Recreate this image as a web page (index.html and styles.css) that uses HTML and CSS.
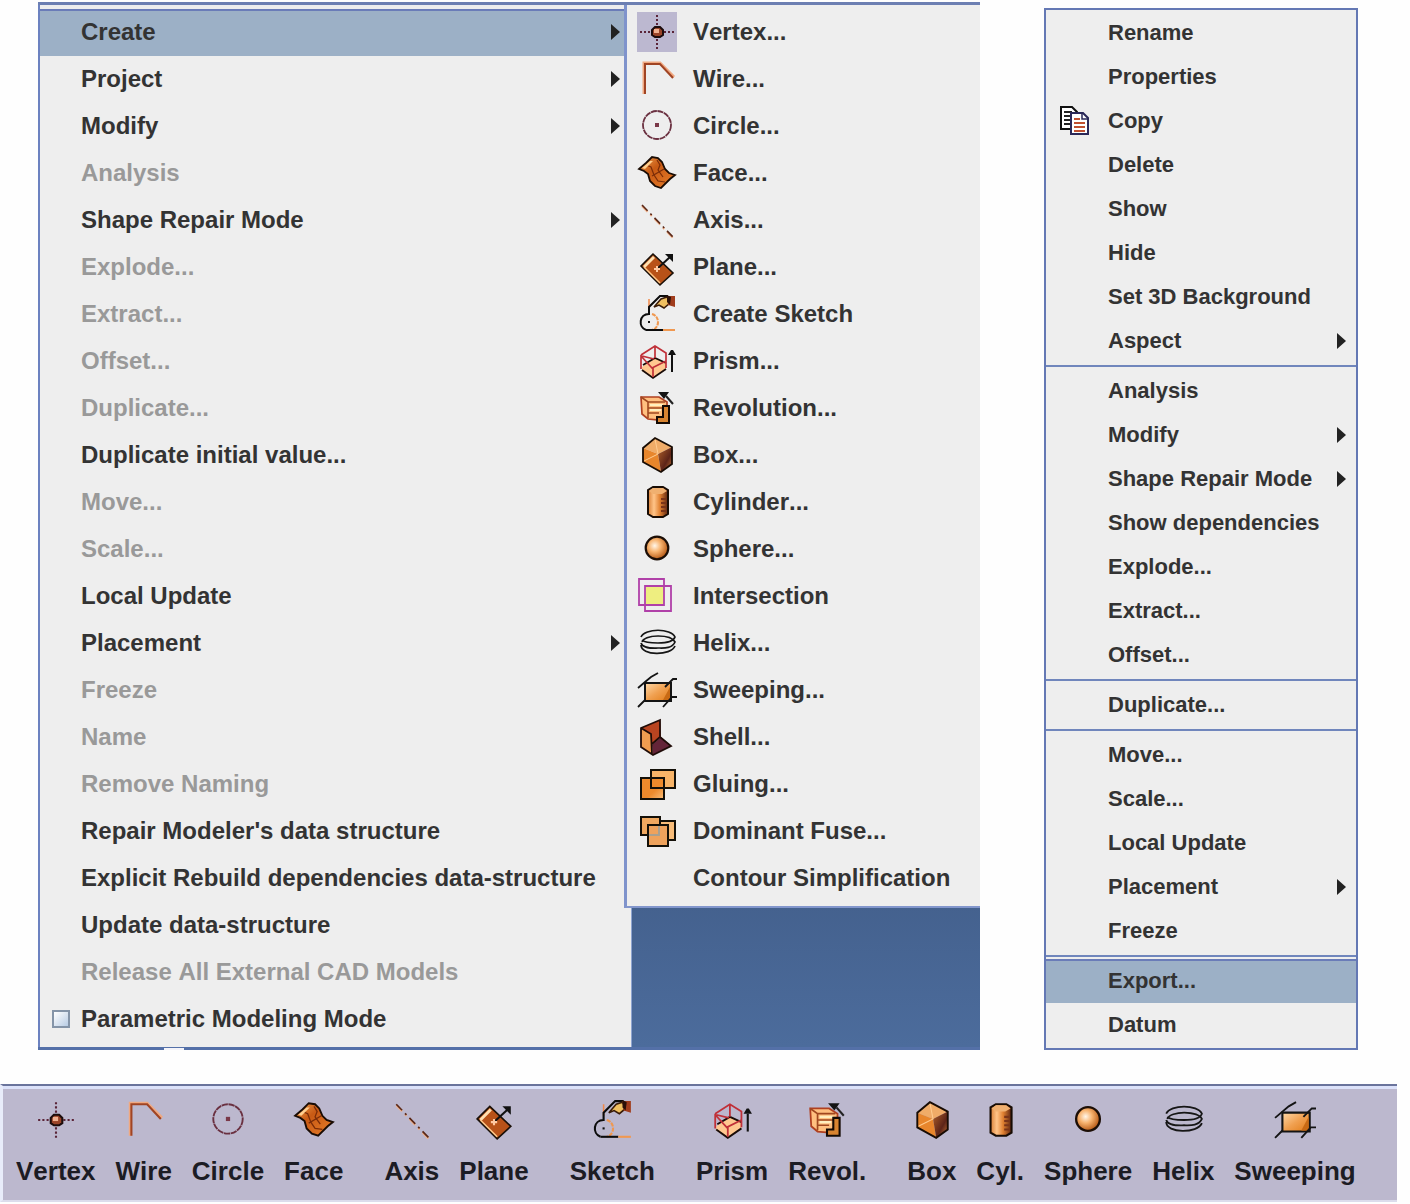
FILE: index.html
```html
<!DOCTYPE html>
<html lang="en">
<head>
<meta charset="utf-8">
<title>Geometry menus</title>
<link rel="stylesheet" href="styles.css">
</head>
<body>
<svg class="defs" aria-hidden="true">
  <defs>
    <linearGradient id="g-orange" x1="0" y1="0" x2="1" y2="1"><stop offset="0" stop-color="#ffd9a8"/><stop offset=".5" stop-color="#f0a050"/><stop offset="1" stop-color="#e07a14"/></linearGradient>
    <linearGradient id="g-deep" x1="0" y1="0" x2="1" y2="1"><stop offset="0" stop-color="#ee8a2c"/><stop offset=".6" stop-color="#ee8a2c"/><stop offset="1" stop-color="#fbc07c"/></linearGradient>
    <linearGradient id="g-face" x1="0" y1="0" x2="1" y2="1"><stop offset="0" stop-color="#f0a050"/><stop offset=".4" stop-color="#c85a14"/><stop offset="1" stop-color="#e8802c"/></linearGradient>
    <linearGradient id="g-dark" x1="0" y1="0" x2="1" y2="1"><stop offset="0" stop-color="#b06028"/><stop offset=".6" stop-color="#5c2418"/><stop offset="1" stop-color="#c87838"/></linearGradient>
    <linearGradient id="g-cyl"><stop offset="0" stop-color="#d88038"/><stop offset=".3" stop-color="#ffc488"/><stop offset=".6" stop-color="#e08030"/><stop offset="1" stop-color="#5c2410"/></linearGradient>
    <radialGradient id="g-ball" cx=".4" cy=".4" r=".6"><stop offset="0" stop-color="#fff6ea"/><stop offset=".45" stop-color="#f8b470"/><stop offset="1" stop-color="#b85c18"/></radialGradient>
  </defs>
  <symbol id="arrow" viewBox="0 0 10 16"><path d="M1 0L10 8L1 16Z" fill="#222"/></symbol>
  <symbol id="vertex" viewBox="0 0 40 40">
    <path d="M20 3V38M3 20H39" stroke="#5a2438" stroke-width="2" stroke-dasharray="2 2" fill="none"/>
    <path d="M18 15H23L26 18V23L23 25H18L15 23V18Z" fill="#9a4428" stroke="#1c0c0c" stroke-width="2"/><rect x="17" y="17" width="5" height="4" fill="#f0b090"/>
  </symbol>
  <symbol id="wire" viewBox="0 0 40 40" fill="none">
    <path d="M7 35V4H23L37 18" stroke="#f0a880" stroke-width="3"/><path d="M8 35V5H23L36 19" stroke="#a04424" stroke-width="2"/>
  </symbol>
  <symbol id="circle" viewBox="0 0 40 40"><circle cx="20" cy="19" r="14" fill="none" stroke="#6a3040" stroke-width="1.8" stroke-dasharray="6 .6"/><rect x="18" y="17" width="4" height="4" fill="#7a3848"/></symbol>
  <symbol id="face" viewBox="0 0 40 40">
    <path d="M2 16L9 10L15 4L21 5L25 9L28 16L32 20L38 22L33 26L24 35L18 33L13 28L11 21L7 18Z" fill="url(#g-face)" stroke="#1a0c04" stroke-width="1.8"/>
    <path d="M9 12L14 14L17 22L21 28L28 29M15 23L27 16M20 7L23 12L21 17L26 24" fill="none" stroke="#7a2c08" stroke-width="1.2"/><path d="M5 15L13 8L16 8L8 16Z" fill="#ffd090"/>
  </symbol>
  <symbol id="axis" viewBox="0 0 40 40" fill="none"><path d="M5 6L36 38" stroke="#f0b088" stroke-width="2" stroke-dasharray="8 4 2 4"/><path d="M5 5L36 37" stroke="#5a2818" stroke-width="1.6" stroke-dasharray="8 4 2 4"/></symbol>
  <symbol id="plane" viewBox="0 0 40 40">
    <path d="M4 19L16 7L36 26L23 38Z" fill="#b85218" stroke="#1a1008" stroke-width="1.6"/>
    <path d="M6 19L16 9L18 11L8 21Z" fill="#ffe0b0"/><path d="M7 20L23 36" stroke="#ffc888" stroke-width="1.5"/>
    <path d="M20 22L33 10" stroke="#111" stroke-width="2"/><path d="M28 7H36V15Z" fill="#111"/><path d="M17 22H23M20 19V25" stroke="#ffc8a0" stroke-width="2"/>
  </symbol>
  <symbol id="sketch" viewBox="0 0 40 40" fill="none">
    <path d="M12 5V16" stroke="#f08848" stroke-width="1.5"/><path d="M15 20C23 22 23 34 15 36" stroke="#f09850" stroke-width="2" stroke-dasharray="4 1"/>
    <path d="M12 20C2 20 1 33 9 36M12 21V13L23 2H31" stroke="#0c0c0c" stroke-width="2"/><path d="M9 36H26" stroke="#0c0c0c" stroke-width="2"/><path d="M26 36H38" stroke="#f09850" stroke-width="2"/>
    <path d="M17 13L24 5L30 3L33 9L27 14L22 11Z" fill="#f0c060" stroke="#3a1c08" stroke-width="1.5"/><path d="M30 2H38V13L31 11Z" fill="#a03c1c"/><path d="M30 1L34 3L33 11L30 8Z" fill="#2a1008"/><path d="M11 28H13" stroke="#111" stroke-width="2"/>
  </symbol>
  <symbol id="prism" viewBox="0 0 40 40" fill="none">
    <path d="M5 26L18 17L29 22V28L16 37L5 30Z" fill="#ffc890"/><path d="M5 29L16 37L29 28M6 24L18 17L29 22" stroke="#1a0c08" stroke-width="1.8"/>
    <path d="M4 14L18 5L29 12V27M4 14V28M18 5V17M4 15L15 27L29 20M16 27V36M5 15L17 18" stroke="#c03038" stroke-width="1.7"/><path d="M35 14V31" stroke="#111" stroke-width="2"/><path d="M31 14L34 9H36L39 14Z" fill="#111"/>
  </symbol>
  <symbol id="revol" viewBox="0 0 40 40">
    <path d="M4 9H22L30 14V24L22 32L11 31L5 26Z" fill="#ffc080" stroke="#b04020" stroke-width="1.7"/><path d="M4 9L11 14H28M11 14V30M11 20H26M11 25H22" stroke="#a04820" stroke-width="1.6" fill="none"/><path d="M13 17H26M13 22H24" stroke="#fff0c0" stroke-width="2"/>
    <path d="M26 18H32V35H20V29H26Z" fill="#d88430" stroke="#140a04" stroke-width="2"/><path d="M21 4H32L27 11Z" fill="#141414"/><path d="M29 8L36 16" stroke="#222" stroke-width="2"/>
  </symbol>
  <symbol id="box" viewBox="0 0 40 40">
    <path d="M18 3L35 12L21 19L6 13Z" fill="#f0ac68"/><path d="M6 13L21 19L24 37L6 27Z" fill="#e8862c"/><path d="M35 12V29L24 37L21 19Z" fill="url(#g-dark)"/>
    <path d="M18 4L21 19L7 26" stroke="#ffcc90" stroke-width="1" fill="none"/><path d="M18 3L35 12V29L24 37L6 27V13Z" fill="none" stroke="#180c04" stroke-width="1.8"/>
  </symbol>
  <symbol id="cyl" viewBox="0 0 40 40"><path d="M11 8L16 5H26L31 8V32L26 35H16L11 32Z" fill="url(#g-cyl)" stroke="#180c04" stroke-width="2"/><path d="M12 9L16 6H26L30 9L25 12H16Z" fill="#f0b070"/><path d="M24 17H29M24 21H29M24 25H29M24 29H29" stroke="#7a3418" stroke-width="2"/></symbol>
  <symbol id="sphere" viewBox="0 0 40 40"><circle cx="20" cy="19" r="11.3" fill="url(#g-ball)" stroke="#1c0e06" stroke-width="2.2"/></symbol>
  <symbol id="inter" viewBox="0 0 40 40"><rect x="9" y="10" width="18" height="18" fill="#eeee80"/><path d="M2 3H27V29H2ZM8 10H34V35H8Z" fill="none" stroke="#b040a8" stroke-width="1.8"/></symbol>
  <symbol id="helix" viewBox="0 0 40 40" fill="none" stroke="#161616" stroke-width="1.7"><path d="M4 14C8 5 34 5 38 14C36 20 26 20 21 20S8 20 5 17M5 19C8 11 34 11 38 19C35 26 26 25 21 25S6 26 4 20M4 22C4 33 34 33 38 23"/></symbol>
  <symbol id="sweep" viewBox="0 0 40 40"><path d="M8 13H34V31H8Z" fill="url(#g-orange)" stroke="#141414" stroke-width="2"/><path d="M33 17V30H26Z" fill="#c86a14"/><path d="M1 18L8 12L14 7L21 3M28 17L36 9H40M1 37L8 30M26 37L35 27H40" stroke="#141414" stroke-width="1.8" fill="none"/></symbol>
  <symbol id="shell" viewBox="0 0 40 40"><path d="M4 11L23 3L24 20L15 27Z" fill="#b84420"/><path d="M4 11L14 17L16 38L4 30Z" fill="#f09c50"/><path d="M15 28L24 20L34 29L16 38Z" fill="#642438"/><path d="M4 11L23 3V20L34 29L16 38L4 30ZM4 11L14 17L15 37M15 27L23 20" fill="none" stroke="#200c08" stroke-width="1.8"/></symbol>
  <symbol id="glue" viewBox="0 0 40 40" stroke="#141008" stroke-width="2"><rect x="14" y="6" width="24" height="18" fill="#f8b468"/><rect x="4" y="14" width="23" height="21" fill="url(#g-deep)"/><path d="M14 14V24H27" fill="none"/></symbol>
  <symbol id="fuse" viewBox="0 0 40 40" stroke="#141008" stroke-width="2"><rect x="22" y="10" width="16" height="19" fill="#f8bc78"/><rect x="4" y="6" width="19" height="18" fill="#f0a860"/><rect x="11" y="14" width="20" height="21" fill="#eea25c"/><path d="M12 24H22V15" fill="none" stroke="#a8a090"/></symbol>
  <symbol id="copy" viewBox="0 0 30 30"><path d="M1 1H12L17 6V23H1Z" fill="#fff" stroke="#111" stroke-width="2"/><path d="M4 6H12M4 10H10M4 14H10M4 18H10" stroke="#222" stroke-width="2"/><path d="M11 7H23L28 12V28H11Z" fill="#fff" stroke="#2a2858" stroke-width="2"/><path d="M22 7V13H28" stroke="#2a2858" stroke-width="1.5" fill="none"/><path d="M14 13H20M14 17H25M14 21H25M14 25H25" stroke="#c05030" stroke-width="2"/></symbol>
</svg>

<main class="stage">
  <section class="window" aria-label="Modeler menu">
    <ul class="menu menu-main">
      <li><button class="item selected"><span>Create</span><svg class="arrow"><use href="#arrow"/></svg></button></li>
      <li><button class="item"><span>Project</span><svg class="arrow"><use href="#arrow"/></svg></button></li>
      <li><button class="item"><span>Modify</span><svg class="arrow"><use href="#arrow"/></svg></button></li>
      <li><button class="item" disabled><span>Analysis</span></button></li>
      <li><button class="item"><span>Shape Repair Mode</span><svg class="arrow"><use href="#arrow"/></svg></button></li>
      <li><button class="item" disabled><span>Explode...</span></button></li>
      <li><button class="item" disabled><span>Extract...</span></button></li>
      <li><button class="item" disabled><span>Offset...</span></button></li>
      <li><button class="item" disabled><span>Duplicate...</span></button></li>
      <li><button class="item"><span>Duplicate initial value...</span></button></li>
      <li><button class="item" disabled><span>Move...</span></button></li>
      <li><button class="item" disabled><span>Scale...</span></button></li>
      <li><button class="item"><span>Local Update</span></button></li>
      <li><button class="item"><span>Placement</span><svg class="arrow"><use href="#arrow"/></svg></button></li>
      <li><button class="item" disabled><span>Freeze</span></button></li>
      <li><button class="item" disabled><span>Name</span></button></li>
      <li><button class="item" disabled><span>Remove Naming</span></button></li>
      <li><button class="item"><span>Repair Modeler's data structure</span></button></li>
      <li><button class="item"><span>Explicit Rebuild dependencies data-structure</span></button></li>
      <li><button class="item"><span>Update data-structure</span></button></li>
      <li><button class="item" disabled><span>Release All External CAD Models</span></button></li>
      <li><label class="item" for="parametric"><input type="checkbox" id="parametric" class="check"><span>Parametric Modeling Mode</span></label></li>
    </ul>
    <ul class="menu menu-sub">
      <li><button class="item"><svg class="icon tile"><use href="#vertex"/></svg><span>Vertex...</span></button></li>
      <li><button class="item"><svg class="icon"><use href="#wire"/></svg><span>Wire...</span></button></li>
      <li><button class="item"><svg class="icon"><use href="#circle"/></svg><span>Circle...</span></button></li>
      <li><button class="item"><svg class="icon"><use href="#face"/></svg><span>Face...</span></button></li>
      <li><button class="item"><svg class="icon"><use href="#axis"/></svg><span>Axis...</span></button></li>
      <li><button class="item"><svg class="icon"><use href="#plane"/></svg><span>Plane...</span></button></li>
      <li><button class="item"><svg class="icon"><use href="#sketch"/></svg><span>Create Sketch</span></button></li>
      <li><button class="item"><svg class="icon"><use href="#prism"/></svg><span>Prism...</span></button></li>
      <li><button class="item"><svg class="icon"><use href="#revol"/></svg><span>Revolution...</span></button></li>
      <li><button class="item"><svg class="icon"><use href="#box"/></svg><span>Box...</span></button></li>
      <li><button class="item"><svg class="icon"><use href="#cyl"/></svg><span>Cylinder...</span></button></li>
      <li><button class="item"><svg class="icon"><use href="#sphere"/></svg><span>Sphere...</span></button></li>
      <li><button class="item"><svg class="icon"><use href="#inter"/></svg><span>Intersection</span></button></li>
      <li><button class="item"><svg class="icon"><use href="#helix"/></svg><span>Helix...</span></button></li>
      <li><button class="item"><svg class="icon"><use href="#sweep"/></svg><span>Sweeping...</span></button></li>
      <li><button class="item"><svg class="icon"><use href="#shell"/></svg><span>Shell...</span></button></li>
      <li><button class="item"><svg class="icon"><use href="#glue"/></svg><span>Gluing...</span></button></li>
      <li><button class="item"><svg class="icon"><use href="#fuse"/></svg><span>Dominant Fuse...</span></button></li>
      <li><button class="item"><span>Contour Simplification</span></button></li>
    </ul>
  </section>

  <ul class="menu menu-context">
    <li><button class="item"><span>Rename</span></button></li>
    <li><button class="item"><span>Properties</span></button></li>
    <li><button class="item"><svg class="copy"><use href="#copy"/></svg><span>Copy</span></button></li>
    <li><button class="item"><span>Delete</span></button></li>
    <li><button class="item"><span>Show</span></button></li>
    <li><button class="item"><span>Hide</span></button></li>
    <li><button class="item"><span>Set 3D Background</span></button></li>
    <li><button class="item"><span>Aspect</span><svg class="arrow"><use href="#arrow"/></svg></button></li>
    <li class="rule" role="separator"></li>
    <li><button class="item"><span>Analysis</span></button></li>
    <li><button class="item"><span>Modify</span><svg class="arrow"><use href="#arrow"/></svg></button></li>
    <li><button class="item"><span>Shape Repair Mode</span><svg class="arrow"><use href="#arrow"/></svg></button></li>
    <li><button class="item"><span>Show dependencies</span></button></li>
    <li><button class="item"><span>Explode...</span></button></li>
    <li><button class="item"><span>Extract...</span></button></li>
    <li><button class="item"><span>Offset...</span></button></li>
    <li class="rule" role="separator"></li>
    <li><button class="item"><span>Duplicate...</span></button></li>
    <li class="rule" role="separator"></li>
    <li><button class="item"><span>Move...</span></button></li>
    <li><button class="item"><span>Scale...</span></button></li>
    <li><button class="item"><span>Local Update</span></button></li>
    <li><button class="item"><span>Placement</span><svg class="arrow"><use href="#arrow"/></svg></button></li>
    <li><button class="item"><span>Freeze</span></button></li>
    <li class="rule" role="separator"></li>
    <li><button class="item selected"><span>Export...</span></button></li>
    <li><button class="item"><span>Datum</span></button></li>
  </ul>
</main>

<nav class="toolbar" aria-label="Shapes">
  <div class="group">
    <button class="tool"><svg><use href="#vertex"/></svg>Vertex</button>
    <button class="tool"><svg><use href="#wire"/></svg>Wire</button>
    <button class="tool"><svg><use href="#circle"/></svg>Circle</button>
    <button class="tool"><svg><use href="#face"/></svg>Face</button>
  </div>
  <div class="group">
    <button class="tool"><svg><use href="#axis"/></svg>Axis</button>
    <button class="tool"><svg><use href="#plane"/></svg>Plane</button>
  </div>
  <div class="group">
    <button class="tool"><svg><use href="#sketch"/></svg>Sketch</button>
  </div>
  <div class="group">
    <button class="tool"><svg><use href="#prism"/></svg>Prism</button>
    <button class="tool"><svg><use href="#revol"/></svg>Revol.</button>
  </div>
  <div class="group">
    <button class="tool"><svg><use href="#box"/></svg>Box</button>
    <button class="tool"><svg><use href="#cyl"/></svg>Cyl.</button>
    <button class="tool"><svg><use href="#sphere"/></svg>Sphere</button>
    <button class="tool"><svg><use href="#helix"/></svg>Helix</button>
    <button class="tool"><svg><use href="#sweep"/></svg>Sweeping</button>
  </div>
</nav>
</body>
</html>
```
FILE: styles.css
```css
* { box-sizing: border-box; }
body { margin: 0; background: #fefefe; font-family: "Liberation Sans", Arial, sans-serif; font-weight: bold; font-kerning: none; color: #333; }
button { font: inherit; font-kerning: inherit; color: inherit; background: none; border: 0; margin: 0; text-align: left; }
.defs { position: absolute; width: 0; height: 0; }

.stage { display: grid; grid-template-columns: 3fr 1fr; gap: 64px; padding: 2px 52px 0 38px; }

.window {
  position: relative;
  display: grid;
  grid-template-columns: 586fr 356fr;
  border-top: 3px solid #6c7fb2;
  border-bottom: 3px solid #5470a8;
  background: linear-gradient(#44618e 86%, #4c6c9c);
}
.window::after { content: ""; position: absolute; left: 126px; bottom: -3px; width: 20px; height: 2px; background: #f4f4fa; }

.menu { list-style: none; margin: 0; padding: 3px 0 5px; background: #eee; font-size: 24px; }
.item { display: flex; align-items: center; width: 100%; height: 47px; padding: 0 12px 2px 41px; white-space: nowrap; }
.item:disabled { color: #999; }
.selected { background: #9cb0c6; box-shadow: inset 0 2px #6a7cb8; }
.arrow { width: 10px; height: 16px; margin-left: auto; flex: none; }
.icon { width: 40px; height: 40px; margin-right: 16px; flex: none; }
.tile { background: #bcb8d0; }

.menu-main { margin-right: -8px; border-left: 2px solid #6c82c0; border-right: 1px solid #8ea4d0; }
.menu-main .item { padding-right: 11px; }
.menu-main label.item { padding-left: 12px; }
.check {
  appearance: none;
  width: 18px;
  height: 18px;
  margin: 0 11px 0 0;
  border: 2px solid #8494a8;
  background: linear-gradient(135deg, #fff, #b8cce4);
}
.menu-main li, .menu-sub li { padding-top: 0; }

.menu-sub { position: relative; align-self: start; border-left: 3px solid #7f93cc; border-bottom: 2px solid #8296cc; }
.menu-main, .menu-sub { padding: 4px 0; }
.menu-main .item, .menu-sub .item { padding-bottom: 2px; }
.menu-sub .item { padding-left: 10px; }
.menu-sub .item > span:first-child { padding-left: 56px; }

.menu-context { margin-top: 6px; padding: 1px 0; border: 2px solid #6478b4; font-size: 22px; }
.menu-context .item { height: 44px; padding: 0 10px 0 62px; }
.menu-context .copy { width: 30px; height: 30px; margin: 0 18px 0 -48px; flex: none; }
.rule { height: 2px; margin: 2px 0; background: #7086bc; }

.toolbar {
  display: flex;
  gap: 41px;
  margin: 34px 13px 0 0;
  padding: 13px 10px 12px 13px;
  border-top: 2px solid #6a749c;
  border-left: 3px solid #e8ecfa;
  border-bottom: 2px solid #dcdcec;
  box-shadow: inset 0 3px #dce2fa;
  background: #bcb8ce;
  color: #1c1c24;
  font-size: 26px;
}
.group { display: flex; gap: 20px; }
.tool { display: flex; flex-direction: column; align-items: center; gap: 13px; padding: 0; line-height: 34px; }
.tool svg { width: 42px; height: 42px; }
```
